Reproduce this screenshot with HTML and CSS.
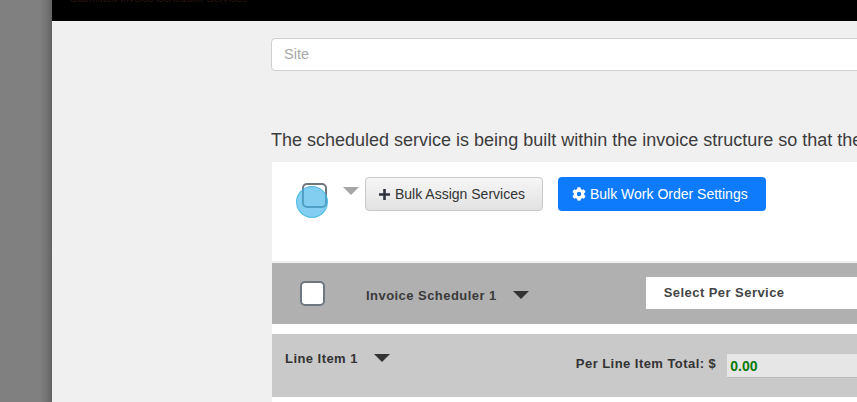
FILE: index.html
```html
<!DOCTYPE html>
<html lang="en">
<head>
<meta charset="utf-8">
<title>Invoice Scheduler</title>
<link rel="stylesheet" href="styles.css">
</head>
<body>
<div class="page">
  <div class="backdrop"></div>
  <main class="modal">
    <header class="topbar"><span class="topbar-text">Submitted Invoice Scheduler Services</span></header>
    <div class="content">
      <div class="field"><input class="site-input" type="text" placeholder="Site"></div>
      <p class="intro">The scheduled service is being built within the invoice structure so that the</p>
      <section class="card">
        <div class="toolbar">
          <div class="check-wrap">
            <span class="checkbox"></span>
            <span class="ripple"></span>
          </div>
          <span class="caret caret-light"></span>
          <button class="btn btn-light" type="button">
            <svg class="icon-plus" viewBox="0 0 13 13" aria-hidden="true"><path d="M6.5 1v11M1 6.5h11"/></svg>
            Bulk Assign Services
          </button>
          <button class="btn btn-primary" type="button">
            <svg class="icon-gear" viewBox="0 0 512 512" aria-hidden="true"><path d="M487 316l-42-25a190 190 0 0 0 0-70l42-25c5-3 7-9 6-14-11-36-30-68-55-95-4-4-10-5-15-2l-42 25c-18-15-38-27-61-35V26c0-6-4-10-9-12-37-8-74-8-110 0-5 2-9 6-9 12v49c-22 8-43 20-61 35L89 85c-5-3-11-2-15 2-25 27-44 59-55 95-2 5 1 11 6 14l42 25a190 190 0 0 0 0 70l-42 25c-5 3-7 9-6 14 11 36 30 68 55 95 4 4 10 5 15 2l42-25c18 15 38 27 61 35v49c0 6 4 10 9 12 37 8 74 8 110 0 5-2 9-6 9-12v-49c22-8 43-20 61-35l42 25c5 3 11 2 15-2 25-27 44-59 55-95 2-5-1-11-6-14zM256 336a80 80 0 1 1 0-160 80 80 0 0 1 0 160z"/></svg>
            Bulk Work Order Settings
          </button>
        </div>
        <div class="scheduler-row">
          <span class="checkbox checkbox-white"></span>
          <span class="scheduler-label">Invoice Scheduler 1</span>
          <span class="caret caret-dark"></span>
          <div class="select-box">Select Per Service</div>
        </div>
        <div class="line-row">
          <span class="line-label">Line Item 1</span>
          <span class="caret caret-dark"></span>
          <span class="total-label">Per Line Item Total: $</span>
          <div class="total-value">0.00</div>
        </div>
      </section>
    </div>
  </main>
</div>
</body>
</html>
```

FILE: styles.css
```css
* { box-sizing: border-box; }
html, body { margin: 0; height: 100%; overflow: hidden; }
body { font-family: "Liberation Sans", Arial, sans-serif; background: #7f7f7f; }

.page { display: flex; height: 402px; width: 857px; overflow: hidden; }
.backdrop {
  flex: 0 0 52px;
  background: linear-gradient(to right, #808080 0, #808080 40px, #727272 47px, #626262 52px);
}
.modal { flex: 1 1 0; min-width: 0; background: #f0f0f0; overflow: hidden; }

.topbar { height: 21px; background: #000; overflow: hidden; padding-left: 18px; }
.topbar-text { display: block; margin-top: -8px; font-size: 10.5px; line-height: 12px; color: #2a1512; white-space: nowrap; }

.content { padding: 17px 0 0 219px; width: 900px; }
.field { height: 33px; }
.site-input {
  display: block; width: 100%; height: 33px; padding: 0 12px 2px;
  border: 1px solid #cfcfcf; border-radius: 4px; background: #fff;
  font: 14.5px "Liberation Sans", Arial, sans-serif; color: #333;
}
.site-input::placeholder { color: #a8a8a8; opacity: 1; }

.intro { margin: 58px 0 0; height: 33px; font-size: 18px; line-height: 22px; color: #3c3c3c; white-space: nowrap; }

.card { background: #fff; margin-left: 1px; height: 240px; }
.toolbar { display: flex; align-items: flex-start; height: 101px; padding: 15px 0 0 30px; border-bottom: 2px solid #f0f0f0; }
.check-wrap { position: relative; width: 25px; height: 25px; margin-top: 6px; }
.checkbox { display: block; width: 25px; height: 25px; border: 2px solid #6e7780; border-radius: 5px; background: #fff; }
.ripple { position: absolute; left: -6px; top: 3px; width: 32px; height: 32px; border-radius: 50%; background: rgba(65, 180, 232, .66); border: 1px solid rgba(65, 180, 232, .8); }

.caret { display: block; flex: none; width: 0; height: 0; border-style: solid; border-width: 8px 8.5px 0; border-color: transparent; }
.caret-light { border-top-color: #a6a6a6; margin: 10px 0 0 16px; }
.caret-dark { border-top-color: #333; }

.btn { display: flex; align-items: center; height: 34px; border-radius: 4px; font: 14px "Liberation Sans", Arial, sans-serif; padding: 0; }
.btn-light { width: 178px; margin-left: 6px; padding-left: 12px; border: 1px solid #c9c9c9; background: linear-gradient(#f6f6f6, #e2e2e2); color: #333; }
.btn-primary { width: 208px; margin-left: 15px; padding-left: 14px; border: 0; background: #0d7bfb; color: #fff; }
.icon-plus { width: 13px; height: 13px; margin-right: 4px; fill: none; stroke: #2f3340; stroke-width: 2.6; }
.icon-gear { width: 14px; height: 14px; margin-right: 4px; fill: #fff; }

.scheduler-row { display: flex; align-items: center; height: 61px; background: #b0b0b0; padding-left: 28px; }
.checkbox-white { flex: none; margin-top: -1px; }
.scheduler-label { margin-left: 41px; margin-top: 4px; font-size: 13px; font-weight: bold; letter-spacing: .45px; color: #3a3a3a; white-space: nowrap; }
.scheduler-row .caret { margin: 3px 0 0 16px; }
.select-box { flex: none; height: 32px; width: 300px; margin-left: 117px; margin-top: -2px; padding: 0 18px; line-height: 32px; background: #fff; font-size: 13px; font-weight: bold; letter-spacing: .45px; color: #444; white-space: nowrap; }

.line-row { display: flex; align-items: center; height: 63px; margin-top: 10px; padding-left: 13px; background: #c9c9c9; }
.line-label { font-size: 13px; font-weight: bold; letter-spacing: .45px; color: #333; white-space: nowrap; margin-top: -15px; }
.line-row .caret { margin: -16px 0 0 16px; }
.total-label { margin-left: 186px; font-size: 13px; font-weight: bold; letter-spacing: .45px; color: #333; white-space: nowrap; margin-top: -4px; }
.total-value { flex: none; width: 300px; height: 24px; margin-left: 11px; padding-left: 3px; line-height: 25px; background: #e6e6e6; border-bottom: 1px solid #bbb; font-size: 14px; font-weight: bold; color: #0a7a0a; }
```
